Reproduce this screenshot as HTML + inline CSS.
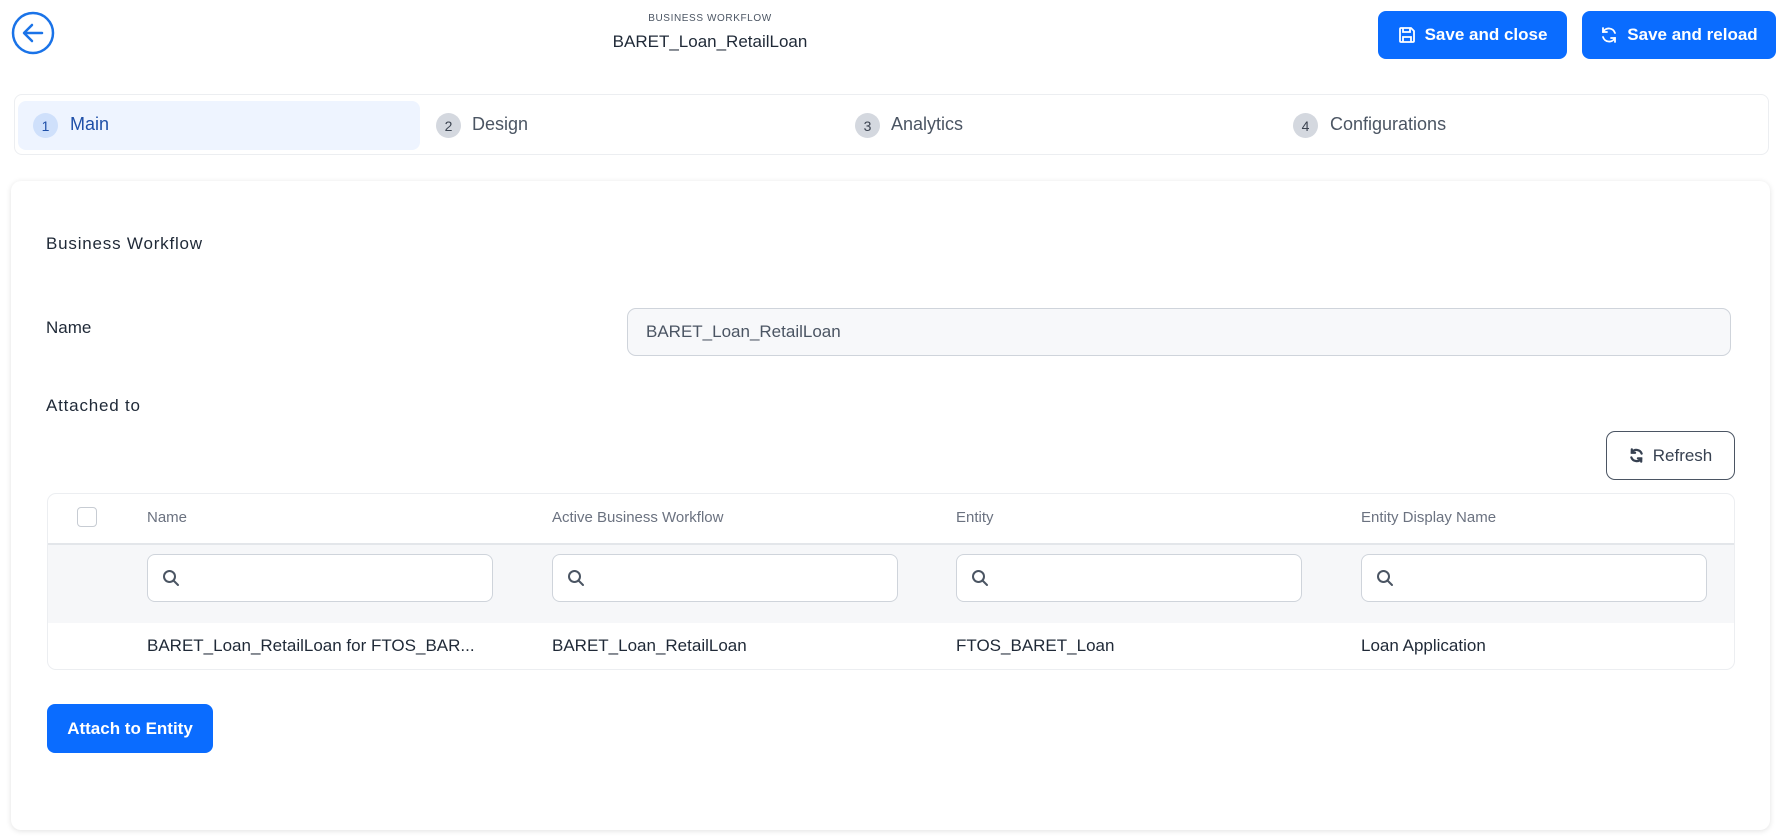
<!DOCTYPE html>
<html><head><meta charset="utf-8"><style>
*{box-sizing:border-box;margin:0;padding:0}
body{width:1778px;height:840px;background:#fff;font-family:"Liberation Sans",sans-serif;position:relative;overflow:hidden;color:#1f2937}
.abs{position:absolute}
.btn{position:absolute;background:#0a6cff;color:#fff;border-radius:8px;font-size:17px;font-weight:bold;display:flex;align-items:center;justify-content:center;gap:9px}
.circ{position:absolute;width:25px;height:25px;border-radius:50%;background:#d4d8df;color:#3b4350;font-size:14px;display:flex;align-items:center;justify-content:center}
.step{position:absolute;font-size:18px;color:#4b5563;top:114px}
.search{position:absolute;top:554px;height:48px;width:346px;background:#fff;border:1px solid #cfd4db;border-radius:8px}
.search svg{position:absolute;left:14px;top:14px}
.hd{position:absolute;top:509px;font-size:15px;color:#6b7280}
.cell{position:absolute;top:636px;font-size:17px;color:#1f2937}
</style></head><body>
<svg class="abs" style="left:11px;top:11px" width="44" height="44" viewBox="0 0 44 44"><circle cx="22" cy="22" r="20" fill="none" stroke="#1a73e8" stroke-width="2.5"/><path d="M31 22H14M21 14l-8 8 8 8" fill="none" stroke="#1a73e8" stroke-width="2.5" stroke-linecap="round" stroke-linejoin="round"/></svg>
<div class="abs" style="left:560px;width:300px;top:13px;text-align:center;font-size:10px;letter-spacing:0.6px;color:#4b5563">BUSINESS WORKFLOW</div>
<div class="abs" style="left:560px;width:300px;top:32px;text-align:center;font-size:17px;color:#1f2937">BARET_Loan_RetailLoan</div>
<div class="btn" style="left:1378px;top:11px;width:189px;height:48px"><svg width="18" height="18" viewBox="0 0 18 18" fill="none" stroke="#fff" stroke-width="1.8"><path d="M2 3a1 1 0 0 1 1-1h10l3 3v10a1 1 0 0 1-1 1H3a1 1 0 0 1-1-1z"/><path d="M5 2v4h7V2M5 16v-5h8v5"/></svg>Save and close</div>
<div class="btn" style="left:1582px;top:11px;width:194px;height:48px"><svg width="18" height="18" viewBox="0 0 18 18" fill="none" stroke="#fff" stroke-width="1.8" stroke-linecap="round"><path d="M15 7a6.5 6.5 0 0 0-12-1M3 11a6.5 6.5 0 0 0 12 1"/><path d="M3 2v4h4M15 16v-4h-4"/></svg>Save and reload</div>
<div class="abs" style="left:14px;top:94px;width:1755px;height:61px;border:1px solid #eceef1;border-radius:8px"></div>
<div class="abs" style="left:18px;top:101px;width:402px;height:49px;background:#eef4ff;border-radius:8px"></div>
<div class="circ" style="left:33px;top:113px;background:#cfe0fb;color:#1e4fa8">1</div><div class="step" style="left:70px;color:#1e4fa8">Main</div>
<div class="circ" style="left:436px;top:113px">2</div><div class="step" style="left:472px">Design</div>
<div class="circ" style="left:855px;top:113px">3</div><div class="step" style="left:891px">Analytics</div>
<div class="circ" style="left:1293px;top:113px">4</div><div class="step" style="left:1330px">Configurations</div>
<div class="abs" style="left:11px;top:181px;width:1759px;height:649px;background:#fff;border-radius:10px;box-shadow:0 1px 6px rgba(0,0,0,0.12)"></div>
<div class="abs" style="left:46px;top:234px;font-size:17px;letter-spacing:0.8px;color:#1f2937">Business Workflow</div>
<div class="abs" style="left:46px;top:318px;font-size:17px;color:#1f2937">Name</div>
<div class="abs" style="left:627px;top:308px;width:1104px;height:48px;background:#f7f8fa;border:1px solid #cfd4db;border-radius:9px;font-size:17px;color:#4b5563;padding:13px 18px">BARET_Loan_RetailLoan</div>
<div class="abs" style="left:46px;top:396px;font-size:17px;letter-spacing:0.8px;color:#1f2937">Attached to</div>
<div class="abs" style="left:1606px;top:431px;width:129px;height:49px;border:1px solid #4b5563;border-radius:9px;font-size:17px;color:#374151;display:flex;align-items:center;justify-content:center;gap:9px"><svg width="15" height="15" viewBox="0 0 16 16" fill="none" stroke="#374151" stroke-width="2.4" stroke-linecap="round"><path d="M13.5 6A6 6 0 0 0 3 4.5M2.5 10A6 6 0 0 0 13 11.5"/><path d="M3 1.5v3.5h3.5M13 14.5V11H9.5"/></svg>Refresh</div>
<div class="abs" style="left:47px;top:493px;width:1688px;height:177px;border:1px solid #eceef1;border-radius:9px;overflow:hidden">
<div class="abs" style="left:0;top:49px;width:100%;height:80px;background:#f6f7f9;border-top:2px solid #e3e6ea"></div></div>
<div class="abs" style="left:77px;top:507px;width:20px;height:20px;border:1px solid #c7ccd3;border-radius:4px;background:#fff"></div>
<div class="hd" style="left:147px">Name</div><div class="hd" style="left:552px">Active Business Workflow</div><div class="hd" style="left:956px">Entity</div><div class="hd" style="left:1361px">Entity Display Name</div>
<div class="search" style="left:147px"><svg width="18" height="18" viewBox="0 0 18 18" fill="none" stroke="#4b5563" stroke-width="2"><circle cx="7.5" cy="7.5" r="5.5"/><path d="M11.5 11.5l4.5 4.5" stroke-linecap="round"/></svg></div>
<div class="search" style="left:552px"><svg width="18" height="18" viewBox="0 0 18 18" fill="none" stroke="#4b5563" stroke-width="2"><circle cx="7.5" cy="7.5" r="5.5"/><path d="M11.5 11.5l4.5 4.5" stroke-linecap="round"/></svg></div>
<div class="search" style="left:956px"><svg width="18" height="18" viewBox="0 0 18 18" fill="none" stroke="#4b5563" stroke-width="2"><circle cx="7.5" cy="7.5" r="5.5"/><path d="M11.5 11.5l4.5 4.5" stroke-linecap="round"/></svg></div>
<div class="search" style="left:1361px"><svg width="18" height="18" viewBox="0 0 18 18" fill="none" stroke="#4b5563" stroke-width="2"><circle cx="7.5" cy="7.5" r="5.5"/><path d="M11.5 11.5l4.5 4.5" stroke-linecap="round"/></svg></div>
<div class="cell" style="left:147px">BARET_Loan_RetailLoan for FTOS_BAR...</div>
<div class="cell" style="left:552px">BARET_Loan_RetailLoan</div>
<div class="cell" style="left:956px">FTOS_BARET_Loan</div>
<div class="cell" style="left:1361px">Loan Application</div>
<div class="btn" style="left:47px;top:704px;width:166px;height:49px">Attach to Entity</div>
</body></html>
